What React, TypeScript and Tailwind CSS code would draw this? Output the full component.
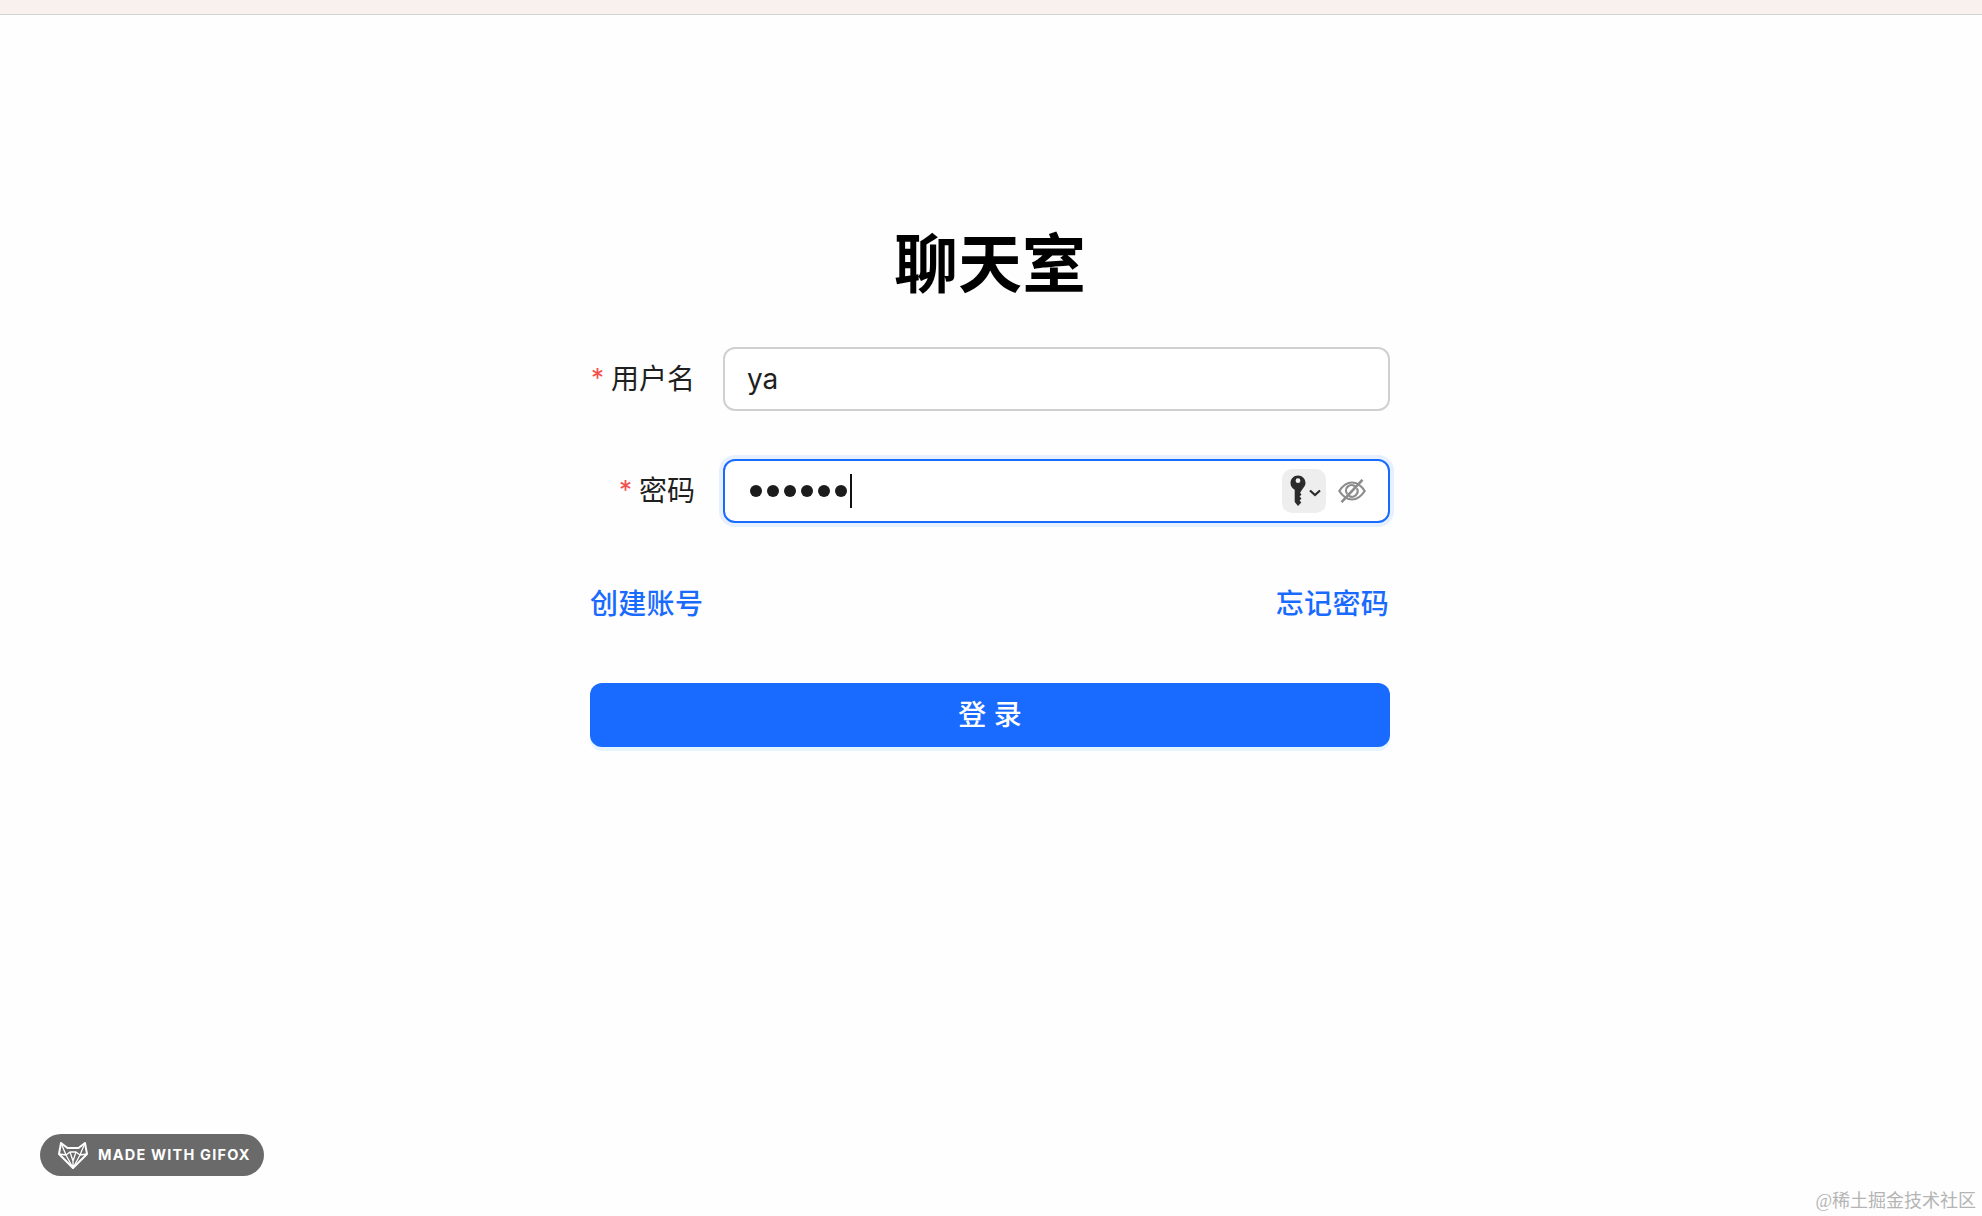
const sans = "font-['Inter','Noto_Sans_CJK_SC',sans-serif]";

function KeyIcon() {
  return (
    <svg width="16" height="32" viewBox="0 0 16 32" className="block">
      <path
        fillRule="evenodd"
        fill="#2b2b2b"
        d="M8 .5C3.800.5.500 3.900.500 8c0 3 1.700 5.500 4.200 6.700V27l3.300 4 3.300-3.500-1.700-1.900 1.900-2-1.900-2 1.900-2.100-1.400-1.800C12.800 13.400 15.500 11 15.500 8 15.500 3.900 12.200.5 8 .5Zm0 2.800a2.400 2.400 0 1 1 0 4.800 2.400 2.400 0 0 1 0-4.800Z"
      />
    </svg>
  );
}

function EyeSlash() {
  return (
    <svg width="28" height="24" viewBox="0 0 28 24" fill="none" stroke="#8c8c8c" strokeWidth="2.200" className="block">
      <path d="M1.300 12C5 6.200 9 3.500 14 3.500s9 2.700 12.700 8.500C23 17.800 19 20.500 14 20.500S5 17.800 1.300 12Z" />
      <path d="M17.500 7.800A5.500 5.500 0 0 0 9.200 15M10.500 16.300a5.500 5.500 0 0 0 8.300-7" />
      <path d="M24.500.8 3.500 23.200" strokeWidth="2.600" />
    </svg>
  );
}

function FoxLogo() {
  return (
    <svg width="30" height="27" viewBox="0 0 30 27" fill="none" stroke="#ffffff" strokeWidth="2" strokeLinejoin="round" className="block">
      <path d="M3 1 9.500 6h11L27 1l2 11-14 14L1 12 3 1Z" />
      <path d="M3 1l5 12 7 13 7-13 5-12M1 12l7 1 4-3h6l4 3 7-1M12 10l-4 3M15 19v7M12 10l3 9 3-9" strokeWidth="1.300" />
    </svg>
  );
}

function Label({ text }: { text: string }) {
  return (
    <div className="w-[133px] shrink-0 flex items-center justify-end pr-[28px] gap-[7px] whitespace-nowrap">
      <span className="text-[#f5504e] text-[26px] leading-none mt-[-2px]">*</span>
      <span className="text-[28px] leading-[40px] text-[#1f1f1f]">{text}</span>
    </div>
  );
}

export default function App() {
  return (
    <div className={`relative w-[1982px] h-[1216px] overflow-hidden bg-[#fefefe] ${sans}`}>
      <div className="h-[15px] bg-[#f8f1ee] border-b border-[#d2d2d2]" />

      <main className="w-[800px] ml-[590px] pt-[203px]">
        <h1 className="h-[96px] mb-[33px] text-center text-[64px] leading-[96px] font-bold text-black font-['Liberation_Serif','Noto_Sans_CJK_SC',serif]">聊天室</h1>

        <div className="flex h-[64px] mb-[48px]">
          <Label text="用户名" />
          <div className="flex-1 flex items-center rounded-[12px] border-2 border-[#d0d0d0] bg-white pl-[22px]">
            <span className="text-[28px] leading-[40px] text-[#1f1f1f]">ya</span>
          </div>
        </div>

        <div className="flex h-[64px] mb-[48px]">
          <Label text="密码" />
          <div className="flex-1 flex items-center rounded-[12px] border-2 border-[#196bff] bg-white pl-[25px] pr-[22px] shadow-[0_0_0_4px_#e6f0ff]">
            <div className="flex items-center gap-[5px]">
              <span className="size-[12px] rounded-full bg-[#1c1c1c]" />
              <span className="size-[12px] rounded-full bg-[#1c1c1c]" />
              <span className="size-[12px] rounded-full bg-[#1c1c1c]" />
              <span className="size-[12px] rounded-full bg-[#1c1c1c]" />
              <span className="size-[12px] rounded-full bg-[#1c1c1c]" />
              <span className="size-[12px] rounded-full bg-[#1c1c1c]" />
            </div>
            <span className="ml-[3px] w-[2px] h-[34px] bg-[#111111]" />
            <div className="ml-auto flex items-center gap-[12px]">
              <div className="w-[44px] h-[44px] rounded-[10px] bg-[#eeeeee] flex items-center pl-[8px] gap-[3px]">
                <KeyIcon />
                <svg width="12" height="8" viewBox="0 0 12 8" fill="none" stroke="#2b2b2b" strokeWidth="2.200" className="block mt-[3px]">
                  <path d="M1 1.500 6 6l5-4.500" />
                </svg>
              </div>
              <EyeSlash />
            </div>
          </div>
        </div>

        <div className="flex justify-between items-center h-[64px] mb-[48px] pr-[1px] pt-[1px] text-[28px] leading-[40px] font-medium tracking-[0.3px] text-[#196bff]">
          <a>创建账号</a>
          <a>忘记密码</a>
        </div>

        <button className="block w-full h-[64px] rounded-[12px] bg-[#196bff] text-white text-[28px] leading-[40px] font-medium text-center shadow-[0_4px_0_#e6f4ff]">
          登 录
        </button>
      </main>

      <div className="absolute left-[40px] top-[1134px] w-[224px] h-[42px] rounded-full bg-[#6a6a6a] flex items-center pl-[18px] gap-[10px]">
        <FoxLogo />
        <span className="text-[14.500px] font-bold tracking-[1.200px] text-white whitespace-nowrap font-['Inter',sans-serif]">MADE WITH GIFOX</span>
      </div>

      <div className="absolute right-[6px] top-[1188px] text-[18px] leading-[26px] text-[#b4b4b4] whitespace-nowrap font-['Liberation_Serif','Noto_Sans_CJK_SC',serif]">
        @稀土掘金技术社区
      </div>
    </div>
  );
}
